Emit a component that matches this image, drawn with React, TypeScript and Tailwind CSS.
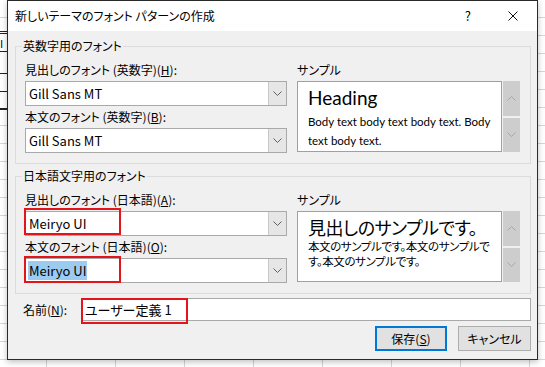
const ui = "font-['Noto_Sans_CJK_JP','Noto_Sans',sans-serif] [font-feature-settings:'palt']"

function Chevron({ up = false, className = '' }: { up?: boolean; className?: string }) {
  return (
    <svg width="9" height="5" viewBox="0 0 9 5" className={className}>
      <path d={up ? 'M0.5 4.5 L4.5 0.5 L8.5 4.5' : 'M0.5 0.5 L4.5 4.5 L8.5 0.5'} fill="none" stroke="currentColor" strokeWidth="1" />
    </svg>
  )
}

function Combo({ value, selected = false, mark }: { value: string; selected?: boolean; mark?: string }) {
  return (
    <div className="relative mt-[3px] flex h-[25px] w-[262px] border border-[#a9a9a9] bg-white">
      <div className="flex flex-1 items-center pl-[2px] text-[13px] leading-none text-black">
        <span className={selected ? 'bg-[#9ccbf1] px-px py-[3px]' : 'px-px'}>{value}</span>
      </div>
      <div className="flex w-[18px] items-center justify-center border-l border-[#c9c9c9] bg-[#e6e6e6] text-[#606060]">
        <Chevron />
      </div>
      {mark && <div className={mark} />}
    </div>
  )
}

function Sample({ children }: { children: React.ReactNode }) {
  return (
    <div className="mt-[3px] flex h-[71px]">
      <div className="w-[205px] overflow-hidden border border-[#a0a0a0] bg-white pl-[10px] pr-[4px]">{children}</div>
      <div className="ml-px flex w-[17px] flex-col gap-[2px]">
        <div className="flex flex-1 items-center justify-center bg-[#cdcdcd] text-[#a6a6a6]">
          <Chevron up />
        </div>
        <div className="flex flex-1 items-center justify-center bg-[#cdcdcd] text-[#a6a6a6]">
          <Chevron />
        </div>
      </div>
    </div>
  )
}

function Group({ title, children }: { title: string; children: React.ReactNode }) {
  return (
    <div className="relative flex h-[118px] gap-[10px] border border-[#dcdcdc] pl-[9px] pt-[15px]">
      <span className="absolute -top-[9px] left-[6px] bg-[#f0f0f0] px-px text-[12px] leading-[16px]">{title}</span>
      {children}
    </div>
  )
}

export default function App() {
  return (
    <div
      className={`relative h-[367px] w-[545px] overflow-hidden bg-white ${ui} bg-[repeating-linear-gradient(to_bottom,transparent_0,transparent_17px,#d6d6d6_17px,#d6d6d6_18px),repeating-linear-gradient(to_right,transparent_0,transparent_46px,#d6d6d6_46px,#d6d6d6_47px,transparent_47px,transparent_69px)]`}
    >
      {/* cells peeking out on the left */}
      <div className="absolute left-0 top-[31px] flex w-[7px] flex-col bg-white">
        <div className="h-[3px] border-y border-[#222]" />
        <div className="h-[18px] border-b border-[#222] text-[11px] leading-[18px] text-black">I</div>
        <div className="h-[22px] border-b border-[#222]" />
        <div className="h-[18px] border-b border-[#222]" />
        <div className="h-[18px] border-b-2 border-[#222]" />
      </div>

      {/* dialog window */}
      <div className="absolute left-[7px] top-0 flex h-[360px] w-[531px] flex-col border border-[#2a2a2a] bg-[#f0f0f0] shadow-[0_2px_6px_rgba(0,0,0,0.25)]">
        <div className="flex h-[30px] items-center bg-white pl-[7px] text-[12px] text-black">
          <span className="flex-1">新しいテーマのフォント パターンの作成</span>
          <span className="mr-[37px] text-[13px]">?</span>
          <svg width="10" height="10" viewBox="0 0 10 10" className="mr-[19px]">
            <path d="M0.5 0.5 L9.5 9.5 M9.5 0.5 L0.5 9.5" stroke="#111" strokeWidth="1" />
          </svg>
        </div>

        <div className="flex flex-1 flex-col pl-[7px] pr-[6px] pt-[15px] text-[12px] text-black">
          <Group title="英数字用のフォント">
            <div className="flex flex-col">
              <div className="leading-[16px]">
                見出しのフォント (英数字)(<u>H</u>):
              </div>
              <Combo value="Gill Sans MT" />
              <div className="mt-[3px] leading-[16px]">
                本文のフォント (英数字)(<u>B</u>):
              </div>
              <Combo value="Gill Sans MT" />
            </div>
            <div className="flex flex-col">
              <div className="leading-[16px]">サンプル</div>
              <Sample>
                <div className="mt-[5px] font-['Lato',sans-serif] text-[19px] leading-[22px] [font-feature-settings:normal]">Heading</div>
                <div className="mt-[3px] font-['Lato',sans-serif] text-[11.5px] leading-[19px] [font-feature-settings:normal]">
                  Body text body text body text. Body text body text.
                </div>
              </Sample>
            </div>
          </Group>

          <div className="mt-[12px]">
            <Group title="日本語文字用のフォント">
              <div className="flex flex-col">
                <div className="leading-[16px]">
                  見出しのフォント (日本語)(<u>A</u>):
                </div>
                <Combo value="Meiryo UI" mark="absolute -left-[2px] -top-[4px] h-[27px] w-[97px] border-2 border-[#e4141b]" />
                <div className="mt-[3px] leading-[16px]">
                  本文のフォント (日本語)(<u>O</u>):
                </div>
                <Combo value="Meiryo UI" selected mark="absolute -left-[2px] -top-[3px] h-[27px] w-[97px] border-2 border-[#e4141b]" />
              </div>
              <div className="flex flex-col">
                <div className="leading-[16px]">サンプル</div>
                <Sample>
                  <div className="mt-[3px] text-[18px] leading-[24px] tracking-[-0.5px]">見出しのサンプルです。</div>
                  <div className="text-[11.5px] leading-[15px] tracking-[-0.4px]">本文のサンプルです。本文のサンプルです。本文のサンプルです。</div>
                </Sample>
              </div>
            </Group>
          </div>

          <div className="mt-[4px] flex items-center">
            <span className="ml-[8px] w-[58px]">
              名前(<u>N</u>):
            </span>
            <div className="relative flex h-[23px] flex-1 items-center border border-[#a9a9a9] bg-white pl-[3px] text-[13px]">
              ユーザー定義 1
              <div className="absolute -left-px -top-px h-[26px] w-[107px] border-2 border-[#e4141b]" />
            </div>
          </div>

          <div className="mt-[5px] flex justify-end gap-[11px]">
            <button className="h-[25px] w-[72px] border-2 border-[#0078d7] bg-[#e1e1e1] text-[12px] text-black">
              保存(<u>S</u>)
            </button>
            <button className="h-[25px] w-[73px] border border-[#adadad] bg-[#e1e1e1] text-[12px] text-black">キャンセル</button>
          </div>
        </div>
      </div>
    </div>
  )
}
